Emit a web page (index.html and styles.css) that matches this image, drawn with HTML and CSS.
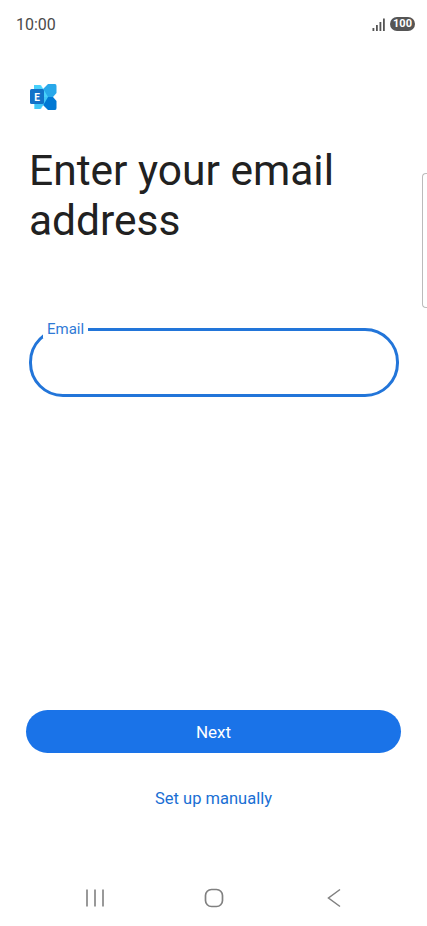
FILE: index.html
```html
<!DOCTYPE html>
<html lang="en">

<head>
    <meta charset="UTF-8" />
    <meta name="viewport" content="width=device-width, initial-scale=1.0" />
    <title>Enter your email address</title>
    <link rel="stylesheet" href="styles.css">
</head>

<body>
    <div class="status-bar">
        <span class="clock">10:00</span>
        <div class="status-icons">
            <svg class="signal" width="14" height="13" viewBox="0 0 14 13">
                <rect x="0.5" y="10" width="1.8" height="3" fill="#555" />
                <rect x="4" y="7" width="1.8" height="6" fill="#555" />
                <rect x="7.5" y="4" width="1.8" height="9" fill="#555" />
                <rect x="11" y="0.5" width="1.8" height="12.5" fill="#555" />
            </svg>
            <span class="battery">100</span>
        </div>
    </div>

    <div class="content">
        <svg class="logo" width="28" height="28" viewBox="0 0 28 28">
            <path d="M5 2 H11 L14 6 L19 1 H26 Q27.500 1 27.500 3 V10 L24 14 H14 L5 7 Z" fill="#28a8ea" />
            <path d="M14 14 H24 L27.500 18 V25 Q27.500 27 26 27 H19 L14 22 L11 26 H6 V18 Z" fill="#0078d4" />
            <path d="M5 2 H12 L19 14 L12 26 H5 Z" fill="#50d9ff" opacity="0.8" />
            <path d="M1 7.500 Q1 6 2.500 6 H13.500 Q15 6 15 7.500 V19.500 Q15 21 13.500 21 H2.500 Q1 21 1 19.500 Z" fill="#1272c8" />
            <text x="8" y="17.500" class="logo-letter">E</text>
        </svg>

        <h1 class="title">Enter your email address</h1>

        <fieldset class="email-field">
            <legend class="email-label">Email</legend>
            <input class="email-input" type="email" aria-label="Email">
        </fieldset>
    </div>

    <div class="actions">
        <button class="next-btn">Next</button>
        <a class="manual-link">Set up manually</a>
    </div>

    <div class="nav-bar">
        <svg width="20" height="20" viewBox="0 0 20 20">
            <path d="M2 1.500 V18.500 M10 1.500 V18.500 M18 1.500 V18.500" stroke="#808080" stroke-width="1.600" fill="none" />
        </svg>
        <svg width="20" height="20" viewBox="0 0 20 20">
            <rect x="1.500" y="1.500" width="17" height="17" rx="6" stroke="#808080" stroke-width="1.700" fill="none" />
        </svg>
        <svg width="20" height="20" viewBox="0 0 20 20">
            <path d="M16 1.500 L4.500 10 L16 18.500" stroke="#808080" stroke-width="1.500" fill="none" />
        </svg>
    </div>

    <div class="side-handle"></div>
</body>

</html>
```

FILE: styles.css
```css
* {
    box-sizing: border-box;
    margin: 0;
    padding: 0;
}

body {
    font-family: Roboto, sans-serif;
    background-color: #fff;
    color: #212121;
    width: 427px;
    height: 926px;
    display: flex;
    flex-direction: column;
    overflow: hidden;
    position: relative;
}

.status-bar {
    height: 48px;
    padding: 0 12px 0 16px;
    display: flex;
    justify-content: space-between;
    align-items: center;
}

.clock {
    font-size: 16px;
    color: #4a4a4a;
}

.status-icons {
    display: flex;
    align-items: center;
    gap: 4px;
}

.battery {
    width: 25px;
    height: 14px;
    border-radius: 7px;
    background-color: #555;
    color: #fff;
    font-size: 11px;
    font-weight: 700;
    line-height: 14px;
    text-align: center;
}

.content {
    padding: 35px 29px 0;
    flex: 1;
}

.logo {
    display: block;
}

.logo-letter {
    font-family: Roboto, sans-serif;
    font-size: 10px;
    font-weight: 700;
    fill: #fff;
    text-anchor: middle;
}

.title {
    font-size: 42.500px;
    font-weight: 400;
    line-height: 50px;
    margin-top: 35px;
}

.email-field {
    width: 370px;
    height: 76px;
    margin-top: 75px;
    border: 3px solid #2275d9;
    border-radius: 34px;
    padding: 0;
}

.email-label {
    margin-left: 11px;
    padding: 0 4px;
    font-size: 15px;
    line-height: 17px;
    color: #2f7ad6;
}

.email-input {
    width: 100%;
    height: 48px;
    padding: 0 20px;
    border: none;
    outline: none;
    background: transparent;
    font-family: Roboto, sans-serif;
    font-size: 16px;
}

.actions {
    display: flex;
    flex-direction: column;
    align-items: center;
    padding: 0 26px;
}

.next-btn {
    width: 100%;
    height: 43px;
    border: none;
    border-radius: 22px;
    background-color: #1a73e8;
    color: #fff;
    font-family: Roboto, sans-serif;
    font-size: 17px;
    font-weight: 400;
}

.manual-link {
    margin-top: 36px;
    font-size: 16.500px;
    line-height: 19px;
    color: #1a6fd4;
}

.nav-bar {
    height: 48px;
    margin-top: 66px;
    margin-bottom: 4px;
    padding: 0 83.500px 0 84.500px;
    display: flex;
    justify-content: space-between;
    align-items: center;
}

/* edge panel handle, sits over the page */
.side-handle {
    position: absolute;
    top: 173px;
    right: 0;
    width: 5px;
    height: 135px;
    border: 1px solid #bbb;
    border-right: none;
    border-radius: 4px 0 0 4px;
}
```
